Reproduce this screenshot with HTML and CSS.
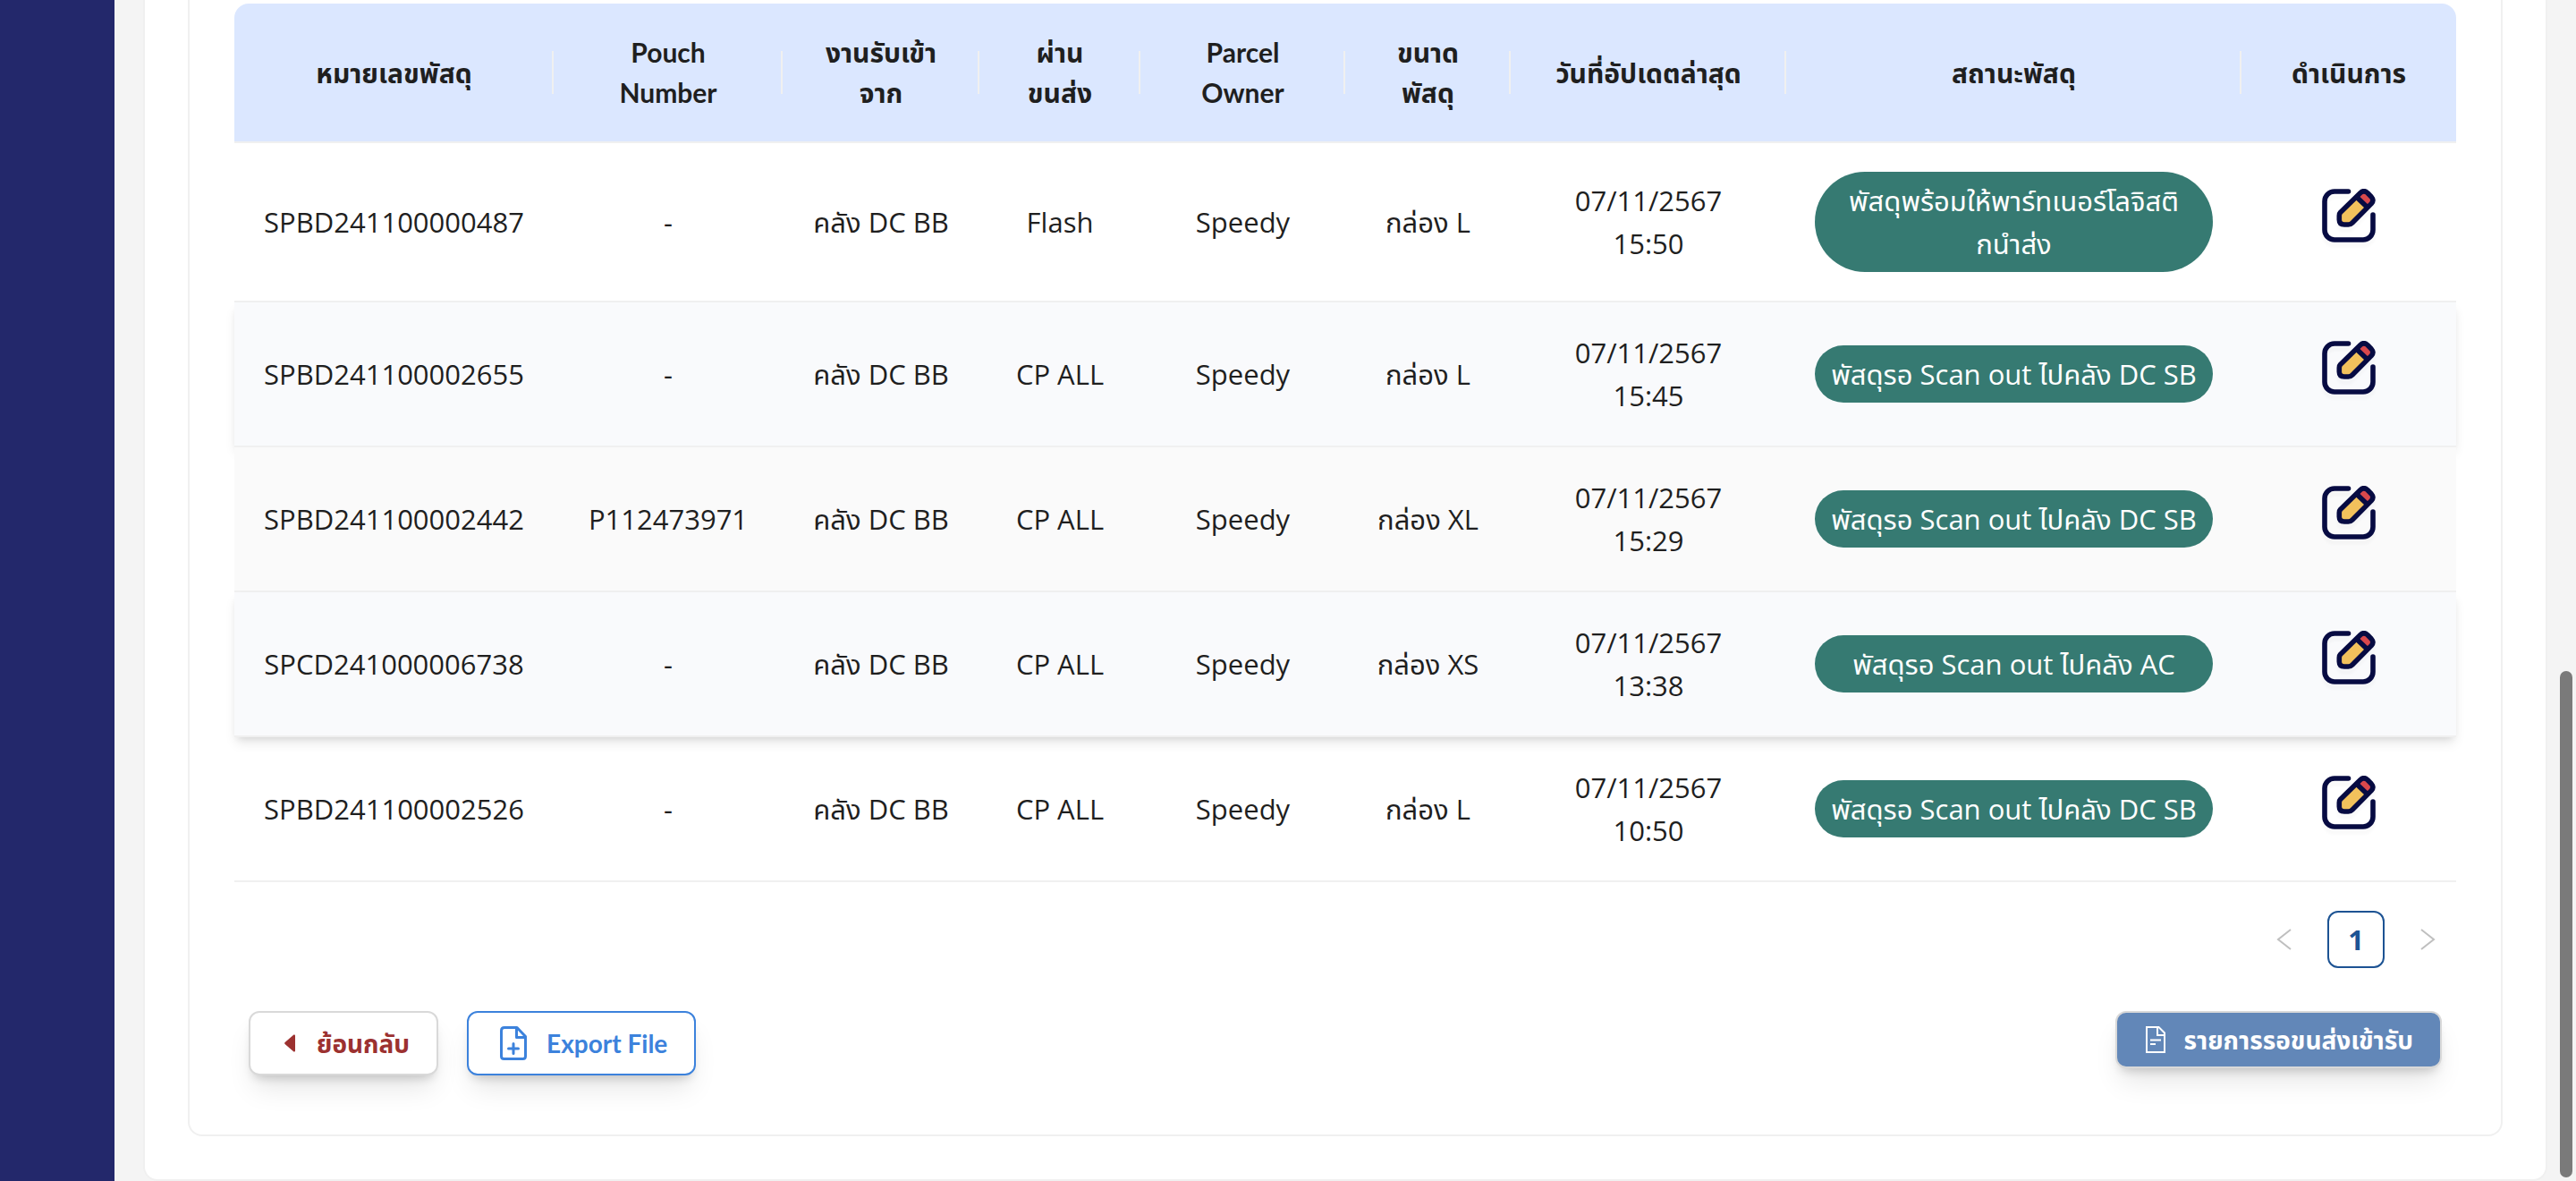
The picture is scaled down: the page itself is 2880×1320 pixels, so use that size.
FILE: index.html
```html
<!DOCTYPE html>
<html lang="th">
<head>
<meta charset="utf-8">
<title>รายการพัสดุ</title>
<link rel="stylesheet" href="styles.css">
</head>
<body>
<svg class="sprite" aria-hidden="true">
  <symbol id="edit" viewBox="0 0 60 60">
    <path d="M20.5 26.5 43 4.5Q46.8 1 50.8 4.5L55.2 9Q58.6 12.8 55.2 16.6L34 38Q32 40 29.5 40H25Q19.3 40 19.3 34.5V30Q19.3 27.8 20.5 26.5Z" fill="#f2c15c"/>
    <path d="M39.5 10 46 3.5 56.5 13 50 20Z" fill="#d9484c"/>
    <g fill="none" stroke="#070b42" stroke-width="5.6" stroke-linecap="round" stroke-linejoin="round">
      <path d="M29.5 3H14A11 11 0 0 0 3 14V46A11 11 0 0 0 14 57H46A11 11 0 0 0 57 46V29"/>
      <path d="M20.5 26.5 43 4.5Q46.8 1 50.8 4.5L55.2 9Q58.6 12.8 55.2 16.6L34 38Q32 40 29.5 40H25Q19.3 40 19.3 34.5V30Q19.3 27.8 20.5 26.5Z"/>
      <path d="M39.5 10 50 20"/>
    </g>
  </symbol>
</svg>
<div class="layout">
  <aside class="sidebar"></aside>
  <main class="content">
    <section class="card">
      <div class="panel">
        <table class="parcels">
          <colgroup>
            <col class="c-id"><col class="c-pouch"><col class="c-from"><col class="c-via"><col class="c-owner"><col class="c-size"><col class="c-date"><col class="c-status"><col class="c-action">
          </colgroup>
          <thead>
            <tr>
              <th>หมายเลขพัสดุ</th>
              <th>Pouch<br>Number</th>
              <th>งานรับเข้า<br>จาก</th>
              <th>ผ่าน<br>ขนส่ง</th>
              <th>Parcel<br>Owner</th>
              <th>ขนาด<br>พัสดุ</th>
              <th>วันที่อัปเดตล่าสุด</th>
              <th>สถานะพัสดุ</th>
              <th>ดำเนินการ</th>
            </tr>
          </thead>
          <tbody>
            <tr>
              <td>SPBD241100000487</td><td>-</td><td>คลัง DC BB</td><td>Flash</td><td>Speedy</td><td>กล่อง L</td><td>07/11/2567<br>15:50</td>
              <td><span class="status">พัสดุพร้อมให้พาร์ทเนอร์โลจิสติ<br>กนำส่ง</span></td>
              <td><button class="edit" type="button" aria-label="แก้ไข"><svg><use href="#edit"/></svg></button></td>
            </tr>
            <tr class="raised">
              <td>SPBD241100002655</td><td>-</td><td>คลัง DC BB</td><td>CP ALL</td><td>Speedy</td><td>กล่อง L</td><td>07/11/2567<br>15:45</td>
              <td><span class="status">พัสดุรอ Scan out ไปคลัง DC SB</span></td>
              <td><button class="edit" type="button" aria-label="แก้ไข"><svg><use href="#edit"/></svg></button></td>
            </tr>
            <tr class="hovered">
              <td>SPBD241100002442</td><td>P112473971</td><td>คลัง DC BB</td><td>CP ALL</td><td>Speedy</td><td>กล่อง XL</td><td>07/11/2567<br>15:29</td>
              <td><span class="status">พัสดุรอ Scan out ไปคลัง DC SB</span></td>
              <td><button class="edit" type="button" aria-label="แก้ไข"><svg><use href="#edit"/></svg></button></td>
            </tr>
            <tr class="raised">
              <td>SPCD241000006738</td><td>-</td><td>คลัง DC BB</td><td>CP ALL</td><td>Speedy</td><td>กล่อง XS</td><td>07/11/2567<br>13:38</td>
              <td><span class="status">พัสดุรอ Scan out ไปคลัง AC</span></td>
              <td><button class="edit" type="button" aria-label="แก้ไข"><svg><use href="#edit"/></svg></button></td>
            </tr>
            <tr>
              <td>SPBD241100002526</td><td>-</td><td>คลัง DC BB</td><td>CP ALL</td><td>Speedy</td><td>กล่อง L</td><td>07/11/2567<br>10:50</td>
              <td><span class="status">พัสดุรอ Scan out ไปคลัง DC SB</span></td>
              <td><button class="edit" type="button" aria-label="แก้ไข"><svg><use href="#edit"/></svg></button></td>
            </tr>
          </tbody>
        </table>
        <nav class="pagination" aria-label="หน้า">
          <button type="button" class="page" disabled aria-label="ก่อนหน้า"><svg width="24" height="24" viewBox="0 0 24 24"><path d="M19 1 5 12l14 11"/></svg></button>
          <button type="button" class="page current">1</button>
          <button type="button" class="page" disabled aria-label="ถัดไป"><svg width="24" height="24" viewBox="0 0 24 24"><path d="m5 1 14 11L5 23"/></svg></button>
        </nav>
        <div class="actions">
          <button type="button" class="btn back">
            <svg width="12" height="20" viewBox="0 0 12 20"><path d="M.6 9 10.4.6Q12 0 12 1.600V18.400Q12 20 10.400 19.400L.6 11Q-.4 10 .6 9Z" fill="currentColor"/></svg>
            <span>ย้อนกลับ</span>
          </button>
          <button type="button" class="btn export">
            <svg width="30" height="38" viewBox="0 0 30 38" fill="none" stroke="currentColor" stroke-width="3" stroke-linejoin="round" stroke-linecap="round"><path d="M5 1.500H19L28.500 11.500V33.500Q28.500 36.500 25.500 36.500H4.500Q1.500 36.500 1.500 33.500V5Q1.500 1.500 5 1.500ZM18.500 2V12.500H28M15 19.500V30.500M9.500 25H20.500"/></svg>
            <span>Export File</span>
          </button>
          <button type="button" class="btn pending">
            <svg width="22" height="30" viewBox="0 0 22 30" fill="none" stroke="currentColor" stroke-width="2"><path d="M1 1H14.500L21 7.500V29H1ZM13 1V10H21M5 15.500H17M5 20H11"/></svg>
            <span>รายการรอขนส่งเข้ารับ</span>
          </button>
        </div>
      </div>
    </section>
  </main>
</div>
<div class="scroll-thumb"></div>
</body>
</html>
```
FILE: styles.css
```css
* {
  box-sizing: border-box;
}

body {
  margin: 0;
  background: #f4f4f4;
  color: #1f1f1f;
  font-family: "Open Sans", "Noto Sans Thai", sans-serif;
  font-size: 31px;
  line-height: 48px;
}

button {
  font: inherit;
  color: inherit;
}

.sprite {
  position: absolute;
  width: 0;
  height: 0;
}

.layout {
  display: flex;
  min-height: 100vh;
}

.sidebar {
  flex: 0 0 128px;
  background: #23286b;
}

.content {
  flex: 1;
  min-width: 0;
  padding: 0 32px;
}

.card {
  padding: 0 48px 48px;
  background: #fff;
  border: 2px solid #f0f0f0;
  border-top: 0;
  border-radius: 0 0 16px 16px;
}

.panel {
  padding: 4px 50px 66px;
  border: 2px solid #f0f0f0;
  border-top: 0;
  border-radius: 0 0 16px 16px;
}

.parcels {
  width: 100%;
  table-layout: fixed;
  border-collapse: separate;
  border-spacing: 0;
  text-align: center;
}

.c-id { width: 357px; }
.c-pouch { width: 256px; }
.c-from { width: 220px; }
.c-via { width: 180px; }
.c-owner { width: 229px; }
.c-size { width: 185px; }
.c-date { width: 308px; }
.c-status { width: 509px; }
.c-action { width: 240px; }

.parcels th {
  height: 156px;
  padding: 0;
  background: #dbe7ff linear-gradient(#f0f0f0, #f0f0f0) right center / 2px 48px no-repeat;
  border-bottom: 2px solid #f0f0f0;
  font-family: Lato, "Noto Sans Thai", sans-serif;
  font-size: 30px;
  font-weight: 700;
  line-height: 45px;
  white-space: nowrap;
}

.parcels th:first-child {
  border-top-left-radius: 16px;
}

.parcels th:last-child {
  border-top-right-radius: 16px;
  background-image: none;
}

.parcels td {
  padding: 32px 0;
  border-bottom: 2px solid #f0f0f0;
  white-space: nowrap;
}

.raised {
  background: #f9fafc;
  box-shadow: 0 8px 12px -2px rgba(0, 0, 0, .1), 0 4px 8px -4px rgba(0, 0, 0, .1);
}

.hovered {
  background: #fafafa;
}

.status {
  display: block;
  margin: 0 32px;
  padding: 8px 0;
  border-radius: 56px;
  background: #367a72;
  color: #fff;
}

.edit {
  display: block;
  margin: 0 auto;
  padding: 0 0 14px;
  border: 0;
  background: none;
}

.edit svg {
  display: block;
  width: 60px;
  height: 60px;
  filter: drop-shadow(0 6px 1px rgba(0, 0, 0, .02));
}

.pagination {
  display: flex;
  justify-content: flex-end;
  gap: 16px;
  margin: 32px 0 48px;
}

.page {
  display: flex;
  align-items: center;
  justify-content: center;
  width: 64px;
  height: 64px;
  padding: 0;
  border: 0;
  border-radius: 12px;
  background: #fff;
}

.page path {
  fill: none;
  stroke: #bfbfbf;
  stroke-width: 2;
}

.current {
  border: 2px solid #1d5393;
  color: #1d5393;
  font-family: "Noto Sans", sans-serif;
  font-weight: 700;
}

.actions {
  display: flex;
  align-items: flex-start;
  gap: 32px;
  padding: 0 16px;
}

.btn {
  display: flex;
  align-items: center;
  height: 72px;
  border: 2px solid #d9d9d9;
  border-radius: 12px;
  background: #fff;
  font-family: Lato, "Noto Sans Thai", sans-serif;
  font-size: 28px;
  font-weight: 700;
  line-height: 40px;
  white-space: nowrap;
  box-shadow: 0 20px 30px -6px rgba(0, 0, 0, .1), 0 8px 12px -6px rgba(0, 0, 0, .2);
}

.back {
  gap: 24px;
  padding: 0 30px 0 38px;
  color: #9c3130;
}

.export {
  gap: 22px;
  padding: 0 30px 0 35px;
  border-color: #3c82dc;
  color: #3c82dc;
}

.pending {
  gap: 20px;
  height: 64px;
  margin-left: auto;
  padding: 0 30px 0 32px;
  background: #6287b8;
  color: #fff;
}

.scroll-thumb {
  position: fixed;
  right: 4px;
  bottom: 4px;
  width: 14px;
  height: 566px;
  border-radius: 7px;
  background: #7a7a7a;
}
```
